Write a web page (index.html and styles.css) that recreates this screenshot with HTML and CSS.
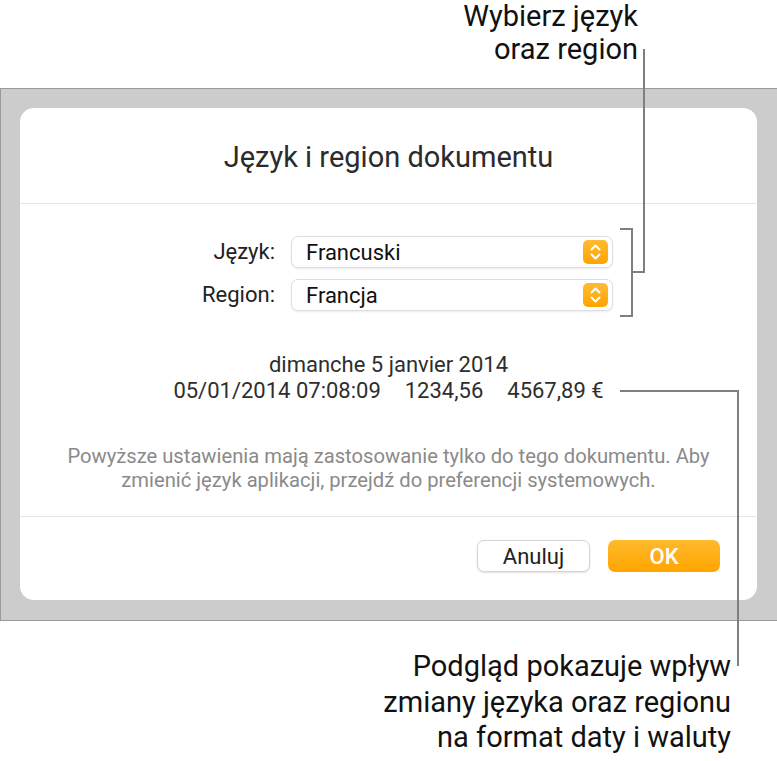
FILE: index.html
```html
<!DOCTYPE html>
<html lang="pl">
<head>
<meta charset="utf-8">
<title>Język i region dokumentu</title>
<link rel="stylesheet" href="styles.css">
</head>
<body>
<div class="page">
  <div class="callout callout-top">Wybierz język<br>oraz region</div>

  <div class="frame">
    <div class="dialog">
      <div class="dialog-header">Język i region dokumentu</div>
      <div class="dialog-body">
        <div class="form">
          <div class="label">Język:</div>
          <div class="popup"><span class="popup-value">Francuski</span><span class="stepper"><svg viewBox="0 0 25 24" width="25" height="24"><path d="M8.5 9.5 L12.5 5.5 L16.5 9.5 M8.5 14.5 L12.5 18.5 L16.5 14.5" fill="none" stroke="#fff" stroke-width="2" stroke-linecap="round" stroke-linejoin="round"/></svg></span></div>
          <div class="label">Region:</div>
          <div class="popup"><span class="popup-value">Francja</span><span class="stepper"><svg viewBox="0 0 25 24" width="25" height="24"><path d="M8.5 9.5 L12.5 5.5 L16.5 9.5 M8.5 14.5 L12.5 18.5 L16.5 14.5" fill="none" stroke="#fff" stroke-width="2" stroke-linecap="round" stroke-linejoin="round"/></svg></span></div>
        </div>
        <div class="preview">
          <div>dimanche 5 janvier 2014</div>
          <div class="preview-row"><span>05/01/2014 07:08:09</span><span>1234,56</span><span>4567,89 €</span></div>
        </div>
        <p class="note">Powyższe ustawienia mają zastosowanie tylko do tego dokumentu. Aby zmienić język aplikacji, przejdź do preferencji systemowych.</p>
      </div>
      <div class="dialog-footer">
        <button class="btn btn-cancel">Anuluj</button>
        <button class="btn btn-ok">OK</button>
      </div>
    </div>
  </div>

  <div class="callout callout-bottom">Podgląd pokazuje wpływ<br>zmiany języka oraz regionu<br>na format daty i waluty</div>

  <svg class="leaders" width="777" height="761" viewBox="0 0 777 761">
    <path d="M620 229 H632 V316 H620 M632 272 H644 V49" fill="none" stroke="#7f7f7f" stroke-width="2"/>
    <path d="M620 391 H738 V666" fill="none" stroke="#7f7f7f" stroke-width="2"/>
  </svg>
</div>
</body>
</html>
```

FILE: styles.css
```css
* { box-sizing: border-box; }
html, body { margin: 0; padding: 0; background: #fff; }
body {
  font-family: Roboto, "Liberation Sans", sans-serif;
  color: #1a1a1a;
  width: 777px;
  height: 761px;
  overflow: hidden;
}
.page { position: relative; width: 777px; height: 761px; }

.callout {
  font-size: 29px;
  color: #111;
  text-align: right;
  white-space: nowrap;
}
.callout-top {
  line-height: 33px;
  padding: 0 139px 0 0;
  height: 88px;
}
.callout-bottom {
  line-height: 35.5px;
  padding: 28px 46px 0 0;
}

.frame {
  background: #cccccc;
  border: 1px solid #9a9a9a;
  border-right: none;
  height: 533px;
  padding: 19px 20px 19px 19px;
}
.dialog {
  background: #fff;
  border-radius: 14px;
  height: 492px;
  display: flex;
  flex-direction: column;
}
.dialog-header {
  height: 96px;
  border-bottom: 1px solid #e6e6e6;
  display: flex;
  align-items: center;
  justify-content: center;
  font-size: 29px;
  color: #2b2b2b;
  padding-top: 2px;
}
.dialog-body {
  padding-top: 32px;
  border-bottom: 1px solid #e6e6e6;
  height: 313px;
}
.form {
  display: grid;
  grid-template-columns: 254px 322px;
  column-gap: 16px;
  row-gap: 11px;
  margin-left: 1px;
}
.label {
  text-align: right;
  font-size: 22px;
  color: #222;
  line-height: 32px;
}
.popup {
  height: 32px;
  background: #fff;
  border: 1px solid #dedede;
  border-radius: 7px;
  box-shadow: 0 1px 2px rgba(0,0,0,0.08);
  display: flex;
  align-items: center;
  justify-content: space-between;
  padding: 0 4px 0 14px;
}
.popup-value { font-size: 22px; color: #111; }
.stepper {
  width: 25px;
  height: 24px;
  border-radius: 5px;
  background: linear-gradient(#ffbb33, #ffa400);
  display: flex;
}
.preview {
  margin-top: 41px;
  text-align: center;
  font-size: 22px;
  line-height: 26px;
  color: #2e2e2e;
}
.preview-row {
  display: flex;
  justify-content: center;
  gap: 24px;
}
.note {
  margin: 40px 0 0;
  text-align: center;
  font-size: 20.2px;
  line-height: 24px;
  color: #8a8a8a;
  padding: 0 38px;
}
.dialog-footer {
  flex: 1;
  display: flex;
  justify-content: flex-end;
  align-items: flex-start;
  gap: 18px;
  padding: 23px 37px 0 0;
}
.btn {
  width: 113px;
  height: 32px;
  border-radius: 7px;
  font-family: Roboto, "Liberation Sans", sans-serif;
  font-size: 22px;
  padding: 0;
}
.btn-cancel {
  background: #fff;
  border: 1px solid #d4d4d4;
  box-shadow: 0 1px 2px rgba(0,0,0,0.12);
  color: #222;
}
.btn-ok {
  width: 112px;
  background: linear-gradient(#ffba2e, #ffa500);
  border: none;
  color: #fff;
  font-weight: 500;
}
.leaders {
  position: absolute;
  left: 0;
  top: 0;
  pointer-events: none;
}
```
